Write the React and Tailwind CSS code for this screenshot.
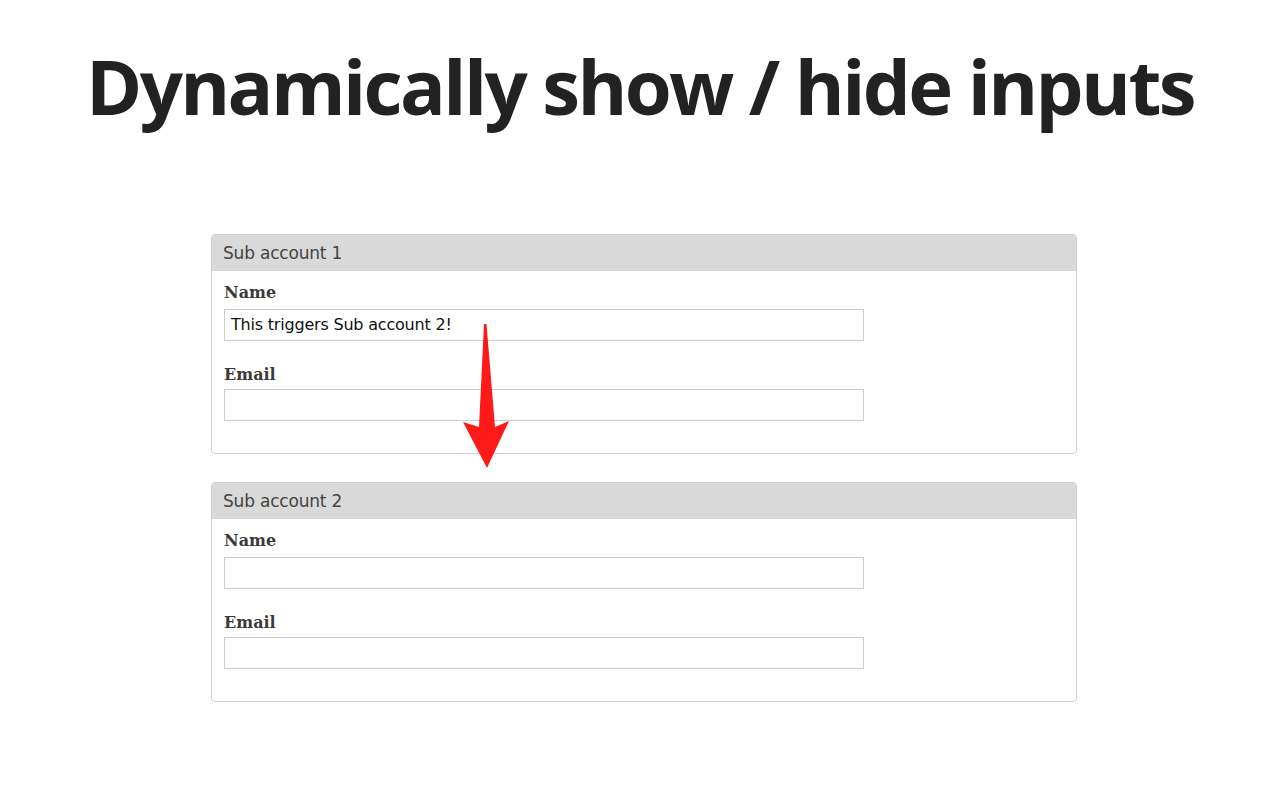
export default function App() {
  const Card = ({ title, nameValue }) => (
    <div className="w-[866px] ml-[211px] rounded-[4px] border border-[#cfcfcf] bg-white overflow-hidden">
      <div className="h-[36px] bg-[#d9d9d9] flex items-center pt-[2px] px-[11px] text-[17px] text-[#444]" style={{ fontFamily: '"DejaVu Sans", Verdana, sans-serif' }}>
        <span className="tracking-[-0.2px]">{title}</span>
      </div>
      <div className="px-[12px] pt-[10px] pb-[32px]">
        <div className="h-[24px] leading-[24px] text-[16px] font-bold text-[#3a3a3a]" style={{ fontFamily: '"DejaVu Serif", Georgia, serif' }}>Name</div>
        <div className="mt-[4px] w-[640px] h-[32px] border border-[#cccccc] flex items-center px-[6px] text-[16px] text-[#111]" style={{ fontFamily: '"DejaVu Sans", Verdana, sans-serif' }}>
          <span className="tracking-[-0.2px]">{nameValue}</span>
        </div>
        <div className="mt-[22px] h-[24px] leading-[24px] text-[16px] font-bold text-[#3a3a3a]" style={{ fontFamily: '"DejaVu Serif", Georgia, serif' }}>Email</div>
        <div className="mt-[2px] w-[640px] h-[32px] border border-[#cccccc]"></div>
      </div>
    </div>
  );
  return (
    <div className="relative w-full h-[800px] bg-white overflow-hidden">
      <h1 className="pt-[40px] h-[234px] text-center text-[76px] leading-[92px] font-bold text-[#222] tracking-[-2.6px]" style={{ fontFamily: '"Open Sans", sans-serif' }}>
        Dynamically show / hide inputs
      </h1>
      <div className="flex flex-col gap-[28px]">
        <Card title="Sub account 1" nameValue="This triggers Sub account 2!" />
        <Card title="Sub account 2" nameValue="" />
      </div>
      <svg className="absolute left-0 top-0 pointer-events-none" width="1280" height="800">
        <path d="M484,324 L486.5,324 L495,427 L509,421 L487,468 L463,422 L479,427 Z" fill="#ff1a1a" />
      </svg>
    </div>
  );
}
